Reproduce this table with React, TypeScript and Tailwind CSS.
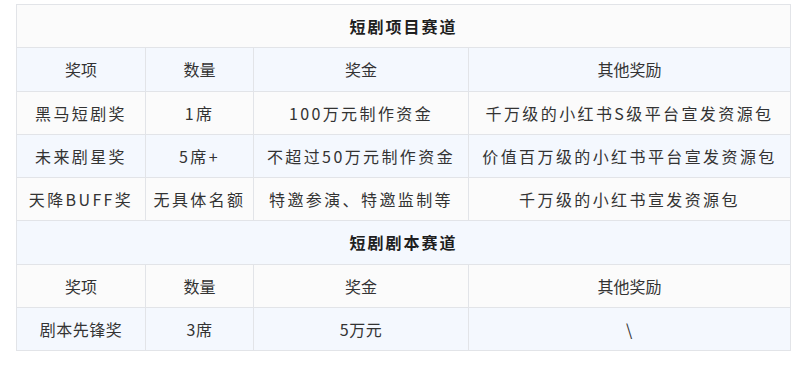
import React from 'react';

type Row = { cells: string[]; spaced?: boolean };

const section1: Row[] = [
  { cells: ['黑马短剧奖', '1席', '100万元制作资金', '千万级的小红书S级平台宣发资源包'], spaced: true },
  { cells: ['未来剧星奖', '5席+', '不超过50万元制作资金', '价值百万级的小红书平台宣发资源包'], spaced: true },
  { cells: ['天降BUFF奖', '无具体名额', '特邀参演、特邀监制等', '千万级的小红书宣发资源包'], spaced: true },
];

const section2: Row[] = [{ cells: ['剧本先锋奖', '3席', '5万元', '\\'] }];

const header = ['奖项', '数量', '奖金', '其他奖励'];

const cell = 'border border-[#e2e4e8] h-[43.25px] p-0 text-center align-middle';

const TitleRow = ({ title, bg }: { title: string; bg: string }) => (
  <tr className={bg}>
    <td colSpan={4} className={`${cell} font-bold text-[16px] tracking-[2px] text-[#1f1f1f]`}>
      {title}
    </td>
  </tr>
);

const HeaderRow = ({ bg }: { bg: string }) => (
  <tr className={bg}>
    {header.map((h) => (
      <td key={h} className={`${cell} text-[16px] text-[#333]`}>
        {h}
      </td>
    ))}
  </tr>
);

const DataRow = ({ row, bg }: { row: Row; bg: string }) => (
  <tr className={bg}>
    {row.cells.map((c, i) => (
      <td
        key={i}
        className={`${cell} text-[16px] text-[#333] ${row.spaced ? 'tracking-[2.4px]' : 'tracking-[0.5px]'}`}
      >
        {c}
      </td>
    ))}
  </tr>
);

export default function App() {
  const white = 'bg-[#fbfbfb]';
  const blue = 'bg-[#f4f8fe]';
  return (
    <div
      className="w-[800px] h-[369px] bg-white pl-4 pt-1"
      style={{ fontFamily: '"Noto Sans CJK SC", "Noto Sans", sans-serif' }}
    >
      <table className="table-fixed border-collapse w-[774px]">
        <colgroup>
          <col className="w-[129px]" />
          <col className="w-[108px]" />
          <col className="w-[215px]" />
          <col className="w-[322px]" />
        </colgroup>
        <tbody>
          <TitleRow title="短剧项目赛道" bg={white} />
          <HeaderRow bg={blue} />
          {section1.map((r, i) => (
            <DataRow key={i} row={r} bg={i % 2 === 0 ? white : blue} />
          ))}
          <TitleRow title="短剧剧本赛道" bg={blue} />
          <HeaderRow bg={white} />
          {section2.map((r, i) => (
            <DataRow key={i} row={r} bg={blue} />
          ))}
        </tbody>
      </table>
    </div>
  );
}
